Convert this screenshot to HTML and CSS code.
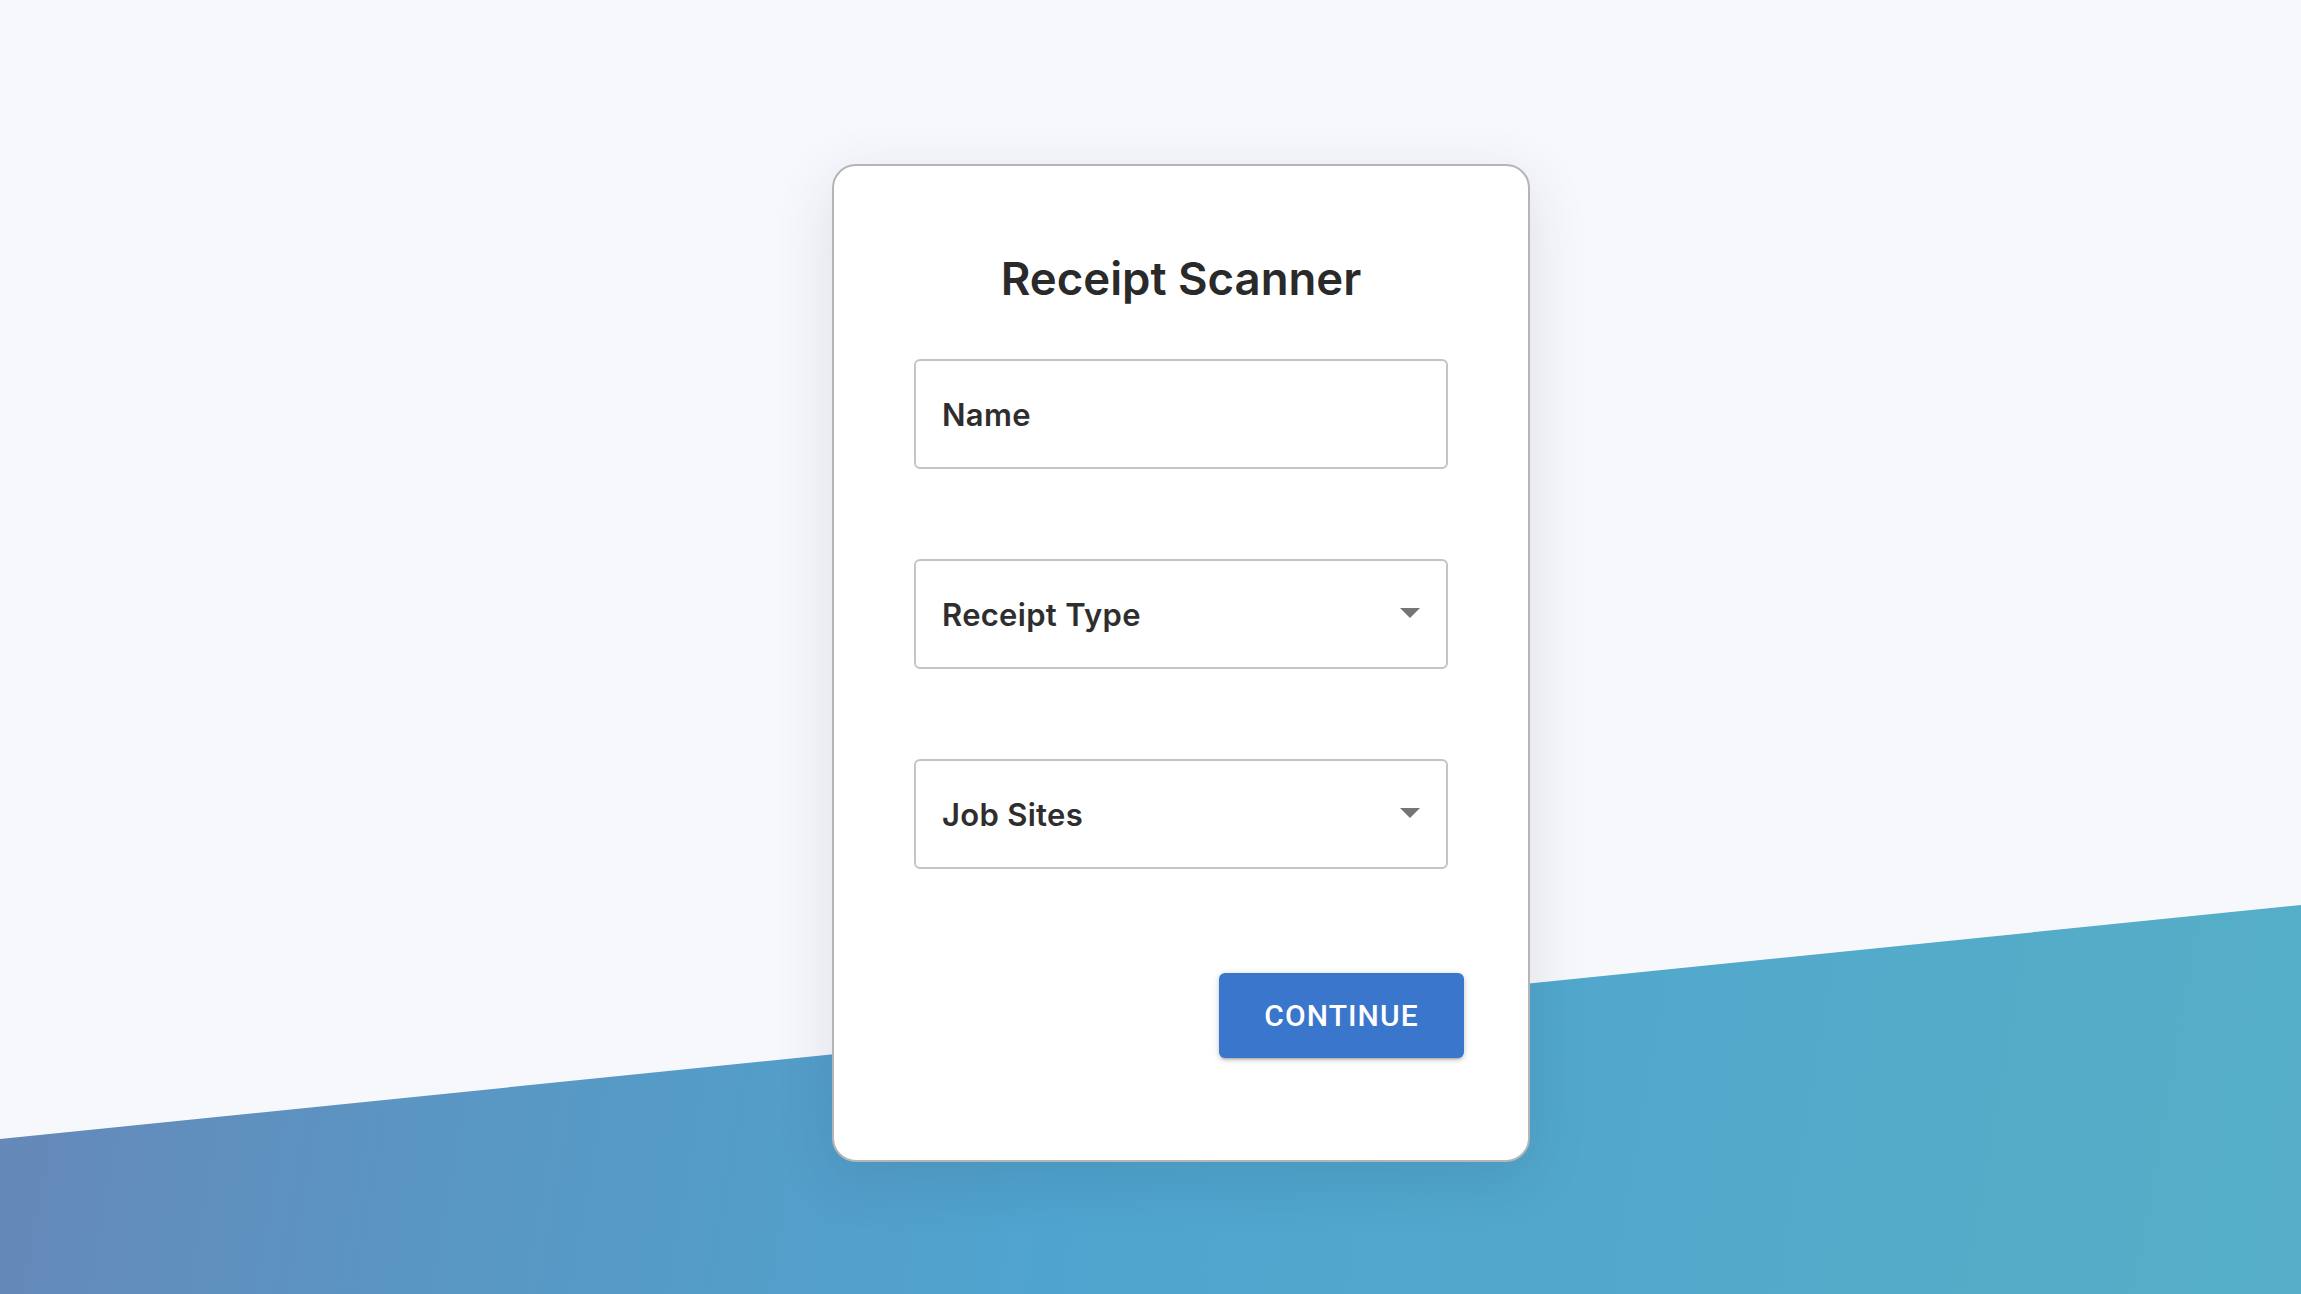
FILE: index.html
```html
<!DOCTYPE html>
<html lang="en">
<head>
<meta charset="utf-8">
<title>Receipt Scanner</title>
<link rel="stylesheet" href="styles.css">
</head>
<body>
<div class="backdrop"></div>
<main class="page">
  <section class="card">
    <h1 class="title">Receipt Scanner</h1>
    <form class="form">
      <div class="field"><span class="field-label">Name</span></div>
      <div class="field select"><span class="field-label">Receipt Type</span>
        <svg class="arrow" viewBox="0 0 20 10" width="20" height="10"><path d="M0 0L10 10L20 0Z"/></svg>
      </div>
      <div class="field select"><span class="field-label">Job Sites</span>
        <svg class="arrow" viewBox="0 0 20 10" width="20" height="10"><path d="M0 0L10 10L20 0Z"/></svg>
      </div>
      <div class="actions">
        <button type="button" class="btn">CONTINUE</button>
      </div>
    </form>
  </section>
</main>
</body>
</html>
```
FILE: styles.css
```css
html, body {
  margin: 0;
  padding: 0;
  height: 100%;
}
body {
  background: #f7f8fc;
  font-family: Inter, "Noto Sans", sans-serif;
  color: #2e2e2e;
  overflow: hidden;
  position: relative;
}
.backdrop {
  position: absolute;
  inset: 0;
  background: linear-gradient(100deg, #6a82b4 0%, #5a96c3 25%, #4fa4cf 50%, #52a9cb 75%, #56afc7 100%);
  clip-path: polygon(0 1139px, 100% 905px, 100% 100%, 0 100%);
  z-index: 0;
}
.page {
  position: relative;
  z-index: 1;
  display: flex;
  justify-content: center;
  padding: 164px 0 0 61px;
  box-sizing: border-box;
}
.card {
  width: 698px;
  box-sizing: border-box;
  background: #fff;
  border: 2px solid #b5b5b5;
  border-radius: 24px;
  padding: 86px 80px 102px;
  box-shadow: 0 16px 60px rgba(30, 40, 70, 0.12);
}
.title {
  margin: 0 0 53px;
  text-align: center;
  font-size: 45.5px;
  line-height: 54px;
  font-weight: 600;
  letter-spacing: 0;
  color: #2a2a2a;
}
.form {
  display: flex;
  flex-direction: column;
  gap: 90px;
}
.field {
  height: 110px;
  box-sizing: border-box;
  border: 2px solid #c4c4c4;
  border-radius: 6px;
  display: flex;
  align-items: center;
  justify-content: space-between;
  padding: 0 26px 0 26px;
}
.field-label {
  font-size: 31px;
  font-weight: 560;
  letter-spacing: 0.3px;
  color: #2e2e2e;
}
.arrow {
  fill: #757575;
  margin-top: -3px;
}
.actions {
  display: flex;
  justify-content: flex-end;
  margin: 14px -16px 0 0;
}
.btn {
  width: 245px;
  height: 85px;
  border: none;
  border-radius: 6px;
  background: #3a76cc;
  color: #fff;
  font-family: Roboto, "Liberation Sans", sans-serif;
  font-weight: 500;
  font-size: 30px;
  letter-spacing: 1.1px;
  box-shadow: 0 3px 2px -2px rgba(0,0,0,0.2), 0 2px 4px rgba(0,0,0,0.14), 0 1px 8px rgba(0,0,0,0.12);
  cursor: pointer;
}
```
